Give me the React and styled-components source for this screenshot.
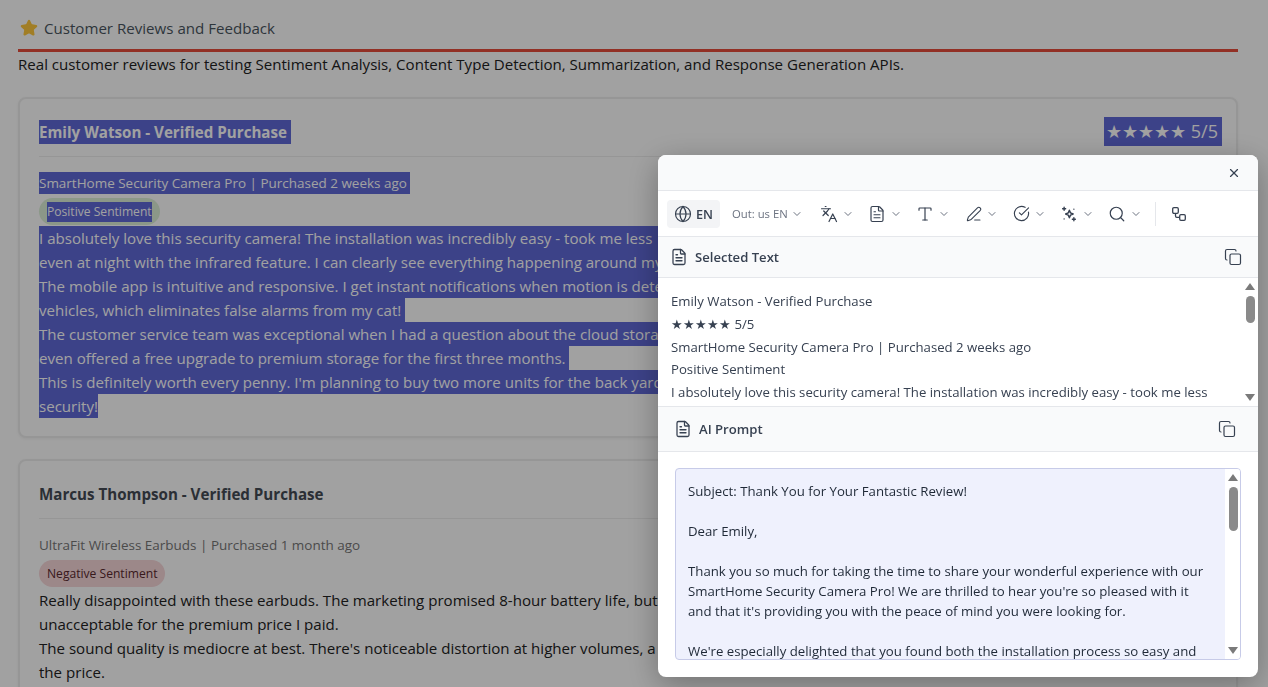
import React from "react";
import styled, { createGlobalStyle } from "styled-components";
import { Globe, Languages, FileText, Type, PenLine, CircleCheckBig, Search, Copy, X, ChevronDown, Star } from "lucide-react";

const Global = createGlobalStyle`
  html, body { margin: 0; height: 100%; overflow: hidden; background: #fff; }
  body { font-family: "Open Sans", "Noto Sans", sans-serif; }
`;
const Page = styled.div`
  padding: 18px 30px 0 18px; height: 687px; box-sizing: border-box; overflow: hidden; color: #222;
`;
const Heading = styled.div`
  display: flex; align-items: center; gap: 6px; height: 20px; padding: 0 0 11px 2px; border-bottom: 3px solid #e74c3c;
  font-size: 15.1px; color: #4a5560;
`;
const Intro = styled.p`
  margin: 0 0 21px; font-size: 15.09px; line-height: 24px; color: #222;
`;
const Card = styled.section`
  border: 2px solid #eeeeee; border-radius: 8px; padding: 21px 14px 18px 19px; margin-bottom: 21px; background: #fff;
  box-shadow: 0 1px 3px rgba(0,0,0,.05);
`;
const CardHead = styled.div`
  display: flex; justify-content: space-between; align-items: center; height: 24px; padding-bottom: 12px; border-bottom: 1px solid #eee; margin-bottom: 15px;
`;
const Name = styled.span`
  font-size: 15.15px; font-weight: 700; line-height: 24px;
  background: ${p => p.$sel ? "#6069d8" : "transparent"};
  color: ${p => p.$sel ? "#fff" : "#444b55"};
  padding-right: ${p => p.$sel ? 4 : 0}px;
`;
const Rating = styled.span`
  font-size: 18px; line-height: 29px; margin-top: -1px; background: #6069d8; color: #fff; padding: 0 4px 0 2px;
`;
const Product = styled.div`
  font-size: 13.47px; line-height: 22px; margin-bottom: 4px; color: ${p => p.$sel ? "#fff" : "#777"};
`;
const Hl = styled.span`
  display: inline-block;
  padding-right: ${p => p.$pr ?? 0}px;
  background: ${p => p.$on ? "#6069d8" : "transparent"};
`;
const PillRow = styled.div`
  height: 27px; margin-bottom: 1px;
`;
const Pill = styled.div`
  display: inline-block; padding: 4px 8px; border-radius: 14px; font-size: 12.1px; line-height: 20px; height: 27px; box-sizing: border-box;
  background: ${p => p.$bg}; color: ${p => p.$fg};
`;
const Line = styled.div`
  font-size: 15.09px; line-height: 24px; white-space: nowrap; width: ${p => p.$full ? "100%" : "fit-content"};
  color: ${p => p.$sel ? "#fff" : "#222"};
  background: ${p => p.$sel ? "#6069d8" : "transparent"};
`;
const Overlay = styled.div`
  position: fixed; inset: 0; background: rgba(0,0,0,.37);
`;
const Popup = styled.div`
  position: fixed; left: 658px; top: 155px; width: 600px; height: 522px; background: #fff; border-radius: 8px; overflow: hidden;
  box-shadow: 0 8px 32px rgba(0,0,0,.3); display: flex; flex-direction: column; font-family: "Open Sans", "Noto Sans", sans-serif; color: #374151;
`;
const TitleBar = styled.div`
  height: 35px; flex: none; background: #f9fafb; border-bottom: 1px solid #e5e7eb; display: flex; justify-content: flex-end; align-items: center; padding-right: 17px;
`;
const Toolbar = styled.div`
  height: 45px; flex: none; border-bottom: 1px solid #e5e7eb; display: flex; align-items: center; padding-left: 9px;
`;
const LangBtn = styled.div`
  width: 53px; height: 28px; border-radius: 4px; background: #f3f4f6; display: flex; align-items: center; gap: 4px; padding-left: 7px; box-sizing: border-box; font-size: 12.7px; font-weight: 600; margin-right: 12px;
`;
const OutBtn = styled.div`
  display: flex; align-items: center; gap: 3px; width: 71px; font-size: 11.3px; color: #6b7280; margin-right: 17px; white-space: nowrap;
`;
const IconBtn = styled.div`
  display: flex; align-items: center; justify-content: flex-end; gap: 4px; width: 34px; margin-right: ${p => p.$mr ?? 14}px; color: #374151;
`;
const LinkBtn = styled.div`
  display: flex; margin-left: 1px; color: #374151;
`;
const Divider = styled.div`
  width: 1px; height: 24px; background: #e5e7eb; margin: 0 15px 0 0;
`;
const SectionHead = styled.div`
  height: ${p => p.$h}px; flex: none; background: #f9fafb; border-bottom: 1px solid #e5e7eb; display: flex; align-items: center; justify-content: space-between; padding: 0 ${p => p.$pr}px 0 ${p => p.$pl}px; box-sizing: border-box;
`;
const SectionTitle = styled.div`
  display: flex; align-items: center; gap: ${p => p.$gap}px; font-size: 13.1px; font-weight: 600; color: #374151;
`;
const Scroll = styled.div`
  position: relative; height: 129px; flex: none; padding: 12px 14px 0 13px; box-sizing: border-box; overflow: hidden; font-size: 13.2px; line-height: 22.75px; border-bottom: 1px solid #e5e7eb; color: #374151; white-space: nowrap;
`;
const Track = styled.div`
  position: absolute; right: ${p => p.$r}px; top: 5px; bottom: 5px; width: 12px; display: flex; flex-direction: column; align-items: center; justify-content: space-between;
`;
const Thumb = styled.div`
  position: absolute; top: 13px; width: 9px; height: ${p => p.$h}px; border-radius: 4.5px; background: #8a8a8a;
`;
const Arrow = styled.div`
  width: 0; height: 0; border-left: 5px solid transparent; border-right: 5px solid transparent;
  ${p => p.$up ? "border-bottom: 7px solid #7a7a7a;" : "border-top: 7px solid #7a7a7a;"}
`;
const PromptWrap = styled.div`
  flex: 1; padding: 16px 17px 17px; min-height: 0; display: flex;
`;
const Prompt = styled.div`
  position: relative; flex: 1; background: #eff1fd; border: 1px solid #c7cbe8; border-radius: 4px; padding: 12px; font-size: 13.22px; line-height: 20px; color: #1f2937; overflow: hidden; box-sizing: border-box;
`;
const PromptRail = styled.div`
  position: absolute; right: 0; top: 0; bottom: 0; width: 15px; background: #fff;
`;
const PLine = styled.div`
  white-space: nowrap; min-height: 20px;
`;

function Sparkle() {
  return <svg width="18" height="18" viewBox="0 0 24 24" fill="none" stroke="currentColor" strokeWidth="1.9" strokeLinecap="round" strokeLinejoin="round"><path d="M12.500 7l1.500 3.500 3.500 1.500-3.500 1.500-1.500 3.500-1.500-3.500L7.500 12l3.500-1.500z"/><path d="M5.500 3v4M3.500 5h4M18.500 17v4M16.500 19h4M5.500 18.500h.01M18.500 5.500h.01"/></svg>;
}
function Linked() {
  return <svg width="14" height="14" viewBox="0 0 14 14" fill="none" stroke="currentColor" strokeWidth="1.3"><rect x=".7" y=".7" width="5.600" height="5.600" rx="1.200"/><rect x="7.700" y="7.700" width="5.600" height="5.600" rx="1.200"/><path d="M3.500 6.300v2.700a1.300 1.300 0 0 0 1.300 1.300h2.900"/></svg>;
}
const Chev = () => <ChevronDown size={12} color="#6b7280" strokeWidth={2} />;

export default function App() {
  return (
    <>
      <Global />
      <Page>
        <Heading><Star size={18} color="#ffc83d" fill="#ffc83d" strokeWidth={2} />Customer Reviews and Feedback</Heading>
        <Intro>Real customer reviews for testing Sentiment Analysis, Content Type Detection, Summarization, and Response Generation APIs.</Intro>
        <Card>
          <CardHead><Name $sel>Emily Watson - Verified Purchase</Name><Rating>★★★★★ 5/5</Rating></CardHead>
          <Product $sel><Hl $on $pr={3}>SmartHome Security Camera Pro | Purchased 2 weeks ago</Hl></Product>
          <PillRow><Pill $bg="#dcf0d8" $fg="#fff"><Hl $on>Positive Sentiment</Hl></Pill></PillRow>
          <Line $sel $full>I absolutely love this security camera! The installation was incredibly easy - took me less</Line>
          <Line $sel $full>even at night with the infrared feature. I can clearly see everything happening around my</Line>
          <Line $sel $full>The mobile app is intuitive and responsive. I get instant notifications when motion is detected</Line>
          <Line $sel>vehicles, which eliminates false alarms from my cat!&nbsp;</Line>
          <Line $sel $full>The customer service team was exceptional when I had a question about the cloud storage</Line>
          <Line $sel>even offered a free upgrade to premium storage for the first three months.&nbsp;</Line>
          <Line $sel $full>This is definitely worth every penny. I'm planning to buy two more units for the back yard</Line>
          <Line $sel>security!</Line>
        </Card>
        <Card>
          <CardHead><Name>Marcus Thompson - Verified Purchase</Name></CardHead>
          <Product>UltraFit Wireless Earbuds | Purchased 1 month ago</Product>
          <PillRow><Pill $bg="#f8d7da" $fg="#5a2a2e">Negative Sentiment</Pill></PillRow>
          <Line>Really disappointed with these earbuds. The marketing promised 8-hour battery life, but</Line>
          <Line>unacceptable for the premium price I paid.</Line>
          <Line>The sound quality is mediocre at best. There's noticeable distortion at higher volumes, a</Line>
          <Line>the price.</Line>
        </Card>
      </Page>
      <Overlay />
      <Popup>
        <TitleBar><X size={14} strokeWidth={2} /></TitleBar>
        <Toolbar>
          <LangBtn><Globe size={18} strokeWidth={1.6} />EN</LangBtn>
          <OutBtn>Out: us EN <Chev /></OutBtn>
          <IconBtn><Languages size={18} strokeWidth={1.6} /><Chev /></IconBtn>
          <IconBtn><FileText size={18} strokeWidth={1.6} /><Chev /></IconBtn>
          <IconBtn><Type size={18} strokeWidth={1.6} /><Chev /></IconBtn>
          <IconBtn><PenLine size={16} strokeWidth={1.6} /><Chev /></IconBtn>
          <IconBtn><CircleCheckBig size={17} strokeWidth={1.6} /><Chev /></IconBtn>
          <IconBtn><Sparkle /><Chev /></IconBtn>
          <IconBtn $mr={13}><Search size={18} strokeWidth={1.6} /><Chev /></IconBtn>
          <Divider />
          <LinkBtn><Linked /></LinkBtn>
        </Toolbar>
        <SectionHead $h={41} $pl={12} $pr={16}><SectionTitle $gap={7}><FileText size={18} strokeWidth={1.7} />Selected Text</SectionTitle><Copy size={18} strokeWidth={1.6} /></SectionHead>
        <Scroll>
          <div>Emily Watson - Verified Purchase</div>
          <div>★★★★★ 5/5</div>
          <div>SmartHome Security Camera Pro | Purchased 2 weeks ago</div>
          <div>Positive Sentiment</div>
          <div>I absolutely love this security camera! The installation was incredibly easy - took me less</div>
          <Track $r={2}><Arrow $up /><Thumb $h={27} /><Arrow /></Track>
        </Scroll>
        <SectionHead $h={45} $pl={16} $pr={22}><SectionTitle $gap={7}><FileText size={18} strokeWidth={1.7} />AI Prompt</SectionTitle><Copy size={18} strokeWidth={1.6} /></SectionHead>
        <PromptWrap>
          <Prompt>
            <PLine>Subject: Thank You for Your Fantastic Review!</PLine>
            <PLine />
            <PLine>Dear Emily,</PLine>
            <PLine />
            <PLine>Thank you so much for taking the time to share your wonderful experience with our</PLine>
            <PLine>SmartHome Security Camera Pro! We are thrilled to hear you're so pleased with it</PLine>
            <PLine>and that it's providing you with the peace of mind you were looking for.</PLine>
            <PLine />
            <PLine>We're especially delighted that you found both the installation process so easy and</PLine>
            <PromptRail><Track $r={1}><Arrow $up /><Thumb $h={44} /><Arrow /></Track></PromptRail>
          </Prompt>
        </PromptWrap>
      </Popup>
    </>
  );
}
